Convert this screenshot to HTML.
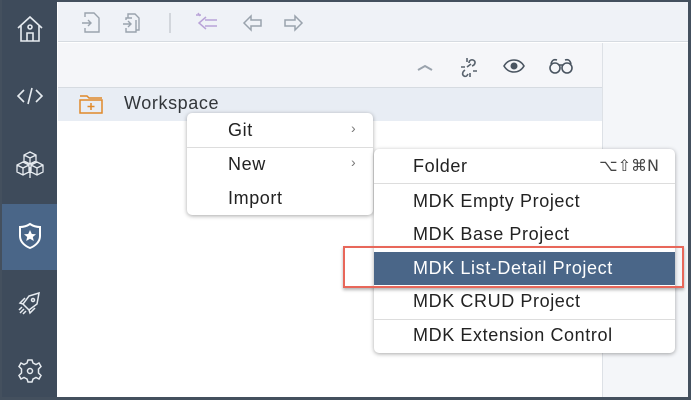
<!DOCTYPE html><html><head><style>
*{margin:0;padding:0;box-sizing:border-box}
body{width:691px;height:400px;background:#44505e;position:relative;overflow:hidden;font-family:"Liberation Sans",sans-serif}
.abs{position:absolute}
.side{left:2px;top:0;width:55px;height:397px;background:#3e4b5b}
.main{left:57px;top:2px;width:631px;height:395px;background:#fff}
.menu{background:#fff;border-radius:5px;box-shadow:0 1px 4px rgba(0,0,0,.35)}
.it{position:absolute;left:0;right:0;font-size:18px;letter-spacing:0.6px;color:#222;}
.sep{position:absolute;left:0;right:0;height:1px;background:#ddd}
svg{position:absolute}
</style></head><body>
<div class="abs side"></div>
<div class="abs" style="left:2px;top:204px;width:55px;height:66px;background:#4a6688"></div>
<svg style="left:15px;top:14px" width="30" height="30" viewBox="0 0 30 30" fill="none" stroke="#e6ebf0" stroke-width="1.6"><path d="M3 14L15 3 27 14M6 11V27H24V11M12 27V19H18V27"/><circle cx="15" cy="13" r="2"/></svg>
<svg style="left:16px;top:86px" width="28" height="20" viewBox="0 0 28 20" fill="none" stroke="#e6ebf0" stroke-width="1.6"><path d="M8 4L2 10 8 16M20 4L26 10 20 16M16 2L12 18"/></svg>
<svg style="left:13px;top:150px" width="34" height="30" viewBox="0 0 34 30" fill="none" stroke="#e6ebf0" stroke-width="1.3"><path d="M17 2L23 5V11L17 14 11 11V5ZM11 5L17 8 23 5M17 8V14M10 12L16 15V22L10 25 4 22V15ZM4 15L10 18 16 15M10 18V25M24 12L30 15V22L24 25 18 22V15ZM18 15L24 18 30 15M24 18V25M17 17V28"/></svg>
<svg style="left:18px;top:222px" width="24" height="28" viewBox="0 0 24 28" fill="none" stroke="#fff" stroke-width="2"><path d="M12 2C9 4 5 5 2 5V14C2 20 7 24 12 26 17 24 22 20 22 14V5C19 5 15 4 12 2Z"/><path d="M12 8L13.8 12 18 12.3 14.8 15 15.8 19 12 16.8 8.2 19 9.2 15 6 12.3 10.2 12Z" fill="#fff" stroke="none"/></svg>
<svg style="left:17px;top:290px" width="26" height="26" viewBox="0 0 26 26" fill="none" stroke="#e6ebf0" stroke-width="1.5"><path d="M22 3L12 6 6 14 12 20 20 14ZM6 14L3 13 8 8M12 20L13 23 18 18M7 19L3 23M9 21L6 24M5 17L2 20"/><circle cx="16" cy="10" r="1.5"/></svg>
<svg style="left:17px;top:358px" width="26" height="26" viewBox="0 0 26 26" fill="none" stroke="#e6ebf0" stroke-width="1.5"><path d="M11 2H15L16 5 19 6.5 22 5 24 8.5 21.5 11V15L24 17.5 22 21 19 19.5 16 21 15 24H11L10 21 7 19.5 4 21 2 17.5 4.5 15V11L2 8.5 4 5 7 6.5 10 5Z"/><circle cx="13" cy="13" r="2.5"/></svg>
<div class="abs main"></div>
<div class="abs" style="left:58px;top:2px;width:630px;height:40px;background:#eff2f7;border-bottom:1px solid #d6dbe1"></div>
<div class="abs" style="left:58px;top:43px;width:545px;height:45px;background:#f5f6f9;border-bottom:1px solid #d6dbe1"></div>
<div class="abs" style="left:58px;top:88px;width:545px;height:33px;background:#e8edf4"></div>
<div class="abs" style="left:602px;top:43px;width:86px;height:354px;background:#f4f6f9;border-left:1px solid #dde1e6"></div>
<svg style="left:80px;top:11px" width="110" height="24" viewBox="0 0 110 24" fill="none" stroke="#9aa3ad" stroke-width="1.4"><path d="M5 6V2H14L19 7V21H5V17M2 12H11M8 9L11 12 8 15"/><path d="M48 7V3H55L59 7V19H56M46 9V7H52M46 17V21H56V9M43 13H51M48 10L51 13 48 16"/><path d="M90 2V22" stroke="#c5cad0"/></svg>
<svg style="left:195px;top:11px" width="120" height="24" viewBox="0 0 120 24" fill="none" stroke-width="1.5"><path d="M11 6L4 12 11 18M10 9H22M10 15H22" stroke="#b9a3d8"/><path d="M3 2L5 5M1 4H6" stroke="#b9a3d8"/><path d="M56 5L49 12 56 19V15H66V9H56Z" stroke="#9aa3ad"/><path d="M100 5L107 12 100 19V15H90V9H100Z" stroke="#9aa3ad"/></svg>
<svg style="left:415px;top:54px" width="165" height="26" viewBox="0 0 165 26" fill="none" stroke-width="1.6"><path d="M3 16L10 12 17 16" stroke="#9aa3ad" stroke-width="2"/><path d="M54 9C54 6 57 5 59 6.5 61 8 60 11 57 12M50 16C47 18 47 21 49 22S52 22 53 20M46 13H50M58 17H62M52 4V8M55 19V23M52 13L56 10" stroke="#59636e"/><path d="M89 12C92 7 96 6 99 6S106 7 109 12C106 17 102 18 99 18S92 17 89 12Z" stroke="#4a5561"/><circle cx="99" cy="12" r="3.5" fill="#4a5561"/><circle cx="140" cy="14" r="5" stroke="#4a5561"/><circle cx="152" cy="14" r="5" stroke="#4a5561"/><path d="M136 10C137 6 139 5 142 6M156 10C155 6 153 5 150 6M144 11H148" stroke="#4a5561"/></svg>
<svg style="left:79px;top:94px" width="24" height="20" viewBox="0 0 24 20" fill="none" stroke="#e08a2a" stroke-width="1.5"><path d="M1 2H8L10 4H23M1 6H23V19H1Z"/><path d="M12 9V16M8.5 12.5H15.5"/></svg>
<div class="abs" style="left:124px;top:93px;font-size:18px;letter-spacing:0.6px;color:#32363a">Workspace</div>
<div class="abs menu" style="left:187px;top:113px;width:186px;height:102px">
<div class="it" style="top:7px;left:41px">Git<span style="position:absolute;left:123px;top:0;color:#777;font-size:14px">›</span></div>
<div class="sep" style="top:34px"></div>
<div class="it" style="top:41px;left:41px">New<span style="position:absolute;left:123px;top:0;color:#777;font-size:14px">›</span></div>
<div class="it" style="top:75px;left:41px">Import</div>
</div>
<div class="abs menu" style="left:374px;top:149px;width:301px;height:204px">
<div class="it" style="top:7px;left:39px">Folder<span style="position:absolute;right:16px;top:0;color:#444;font-size:16px;letter-spacing:0;font-family:'DejaVu Sans',sans-serif">⌥⇧⌘N</span></div>
<div class="sep" style="top:34px"></div>
<div class="it" style="top:42px;left:39px">MDK Empty Project</div>
<div class="it" style="top:75px;left:39px">MDK Base Project</div>
<div style="position:absolute;left:0;right:0;top:103px;height:33px;background:#4a6688"></div>
<div class="it" style="top:109px;left:39px;color:#fff">MDK List-Detail Project</div>
<div class="it" style="top:142px;left:39px">MDK CRUD Project</div>
<div class="sep" style="top:170px"></div>
<div class="it" style="top:176px;left:39px">MDK Extension Control</div>
</div>
<div class="abs" style="left:343px;top:246px;width:341px;height:42px;border:2px solid #e8675a;box-shadow:0 2px 3px rgba(0,0,0,.3)"></div>
</body></html>
